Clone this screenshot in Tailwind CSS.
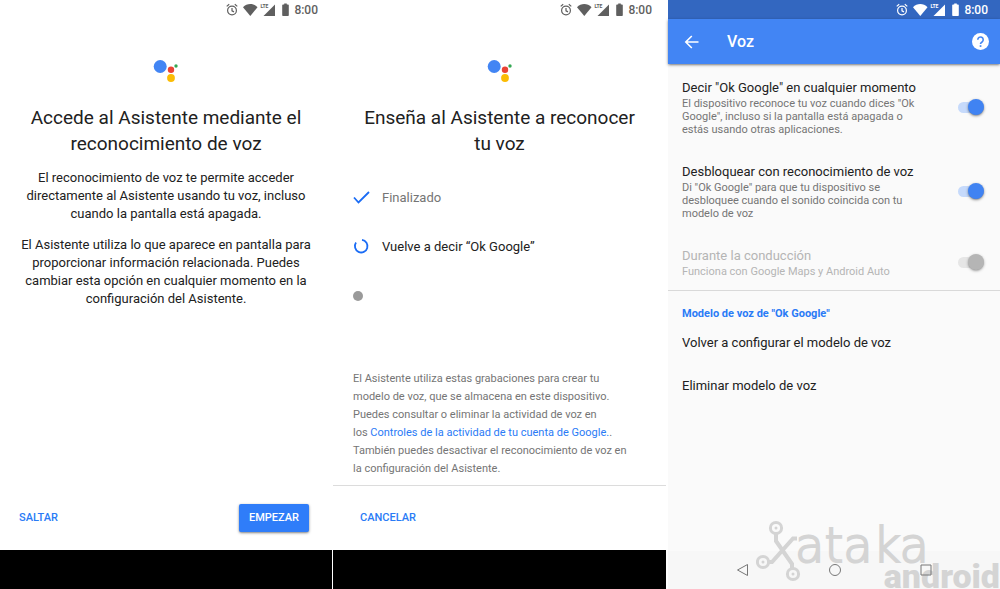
<!DOCTYPE html>
<html lang="es">
<head>
  <meta charset="UTF-8" />
  <meta name="viewport" content="width=device-width, initial-scale=1.0"/>
  <title>Asistente de Google - Voz</title>
  <script src="https://cdn.jsdelivr.net/npm/@tailwindcss/browser@4"></script>
</head>
<body class="bg-white text-[#212121] font-['Roboto',sans-serif]">

  <!-- Shared icons -->
  <svg class="hidden" aria-hidden="true">
    <symbol id="status" viewBox="0 0 64 14">
      <g fill="none" stroke="currentColor" stroke-width="1.2">
        <circle cx="6" cy="7.5" r="4.4"/>
        <path d="M6 5v2.8l2 1.1M.7 3.4 3.2 1.3M11.3 3.4 8.8 1.3"/>
      </g>
      <path fill="currentColor" d="M17 4.3C21-.1 27.500-.1 31.500 4.300L24.300 13z"/>
      <path fill="currentColor" d="M49 1.500V13H37.500z"/>
      <path fill="currentColor" d="M57 1.500h1.200V.5h2.600v1H62q.8 0 .8.8V12.200q0 .8-.8.8h-5q-.8 0-.8-.8V2.300q0-.8.8-.8z"/>
    </symbol>
    <symbol id="assistant" viewBox="0 0 26 24">
      <circle cx="7.200" cy="7.500" r="6.500" fill="#4285f4"/>
      <circle cx="18" cy="10.700" r="3.200" fill="#ea4335"/>
      <circle cx="18" cy="19" r="3.900" fill="#fbbc05"/>
      <circle cx="23" cy="7" r="1.700" fill="#34a853"/>
    </symbol>
  </svg>

  <div class="grid grid-cols-[332fr_333fr_333fr] gap-px min-h-screen">

    <!-- Screen 1: access the assistant -->
    <section class="flex flex-col">
      <div class="flex items-center justify-end gap-1 h-5 pr-3.5 text-[#5f5f5f] text-xs font-medium">
        <span class="relative flex">
          <svg class="w-16 h-3.5"><use href="#status"/></svg>
          <span class="absolute left-[34px] top-0 text-[5px] leading-[6px] font-bold">LTE</span>
        </span>
        <span>8:00</span>
      </div>
      <div class="flex-1 px-4 pt-[39px] text-center">
        <svg class="w-[26px] h-6 mx-auto"><use href="#assistant"/></svg>
        <h1 class="mt-[22px] text-[19px] leading-[26px]">Accede al Asistente mediante el<br>reconocimiento de voz</h1>
        <p class="mt-3 text-[13px] leading-[18px]">El reconocimiento de voz te permite acceder<br>directamente al Asistente usando tu voz, incluso<br>cuando la pantalla está apagada.</p>
        <p class="mt-[13px] text-[13px] leading-[18px]">El Asistente utiliza lo que aparece en pantalla para<br>proporcionar información relacionada. Puedes<br>cambiar esta opción en cualquier momento en la<br>configuración del Asistente.</p>
      </div>
      <div class="flex items-center justify-between h-16 pl-[19px] pr-[23px] text-[11px] font-medium">
        <button type="button" class="text-[#2a7bf6]">SALTAR</button>
        <button type="button" class="h-7 px-2.5 rounded-xs bg-[#2f7df9] text-white shadow-sm shadow-black/40">EMPEZAR</button>
      </div>
      <div class="h-[39px] bg-black"></div>
    </section>

    <!-- Screen 2: voice training -->
    <section class="flex flex-col">
      <div class="flex items-center justify-end gap-1 h-5 pr-3.5 text-[#5f5f5f] text-xs font-medium">
        <span class="relative flex">
          <svg class="w-16 h-3.5"><use href="#status"/></svg>
          <span class="absolute left-[34px] top-0 text-[5px] leading-[6px] font-bold">LTE</span>
        </span>
        <span>8:00</span>
      </div>
      <div class="flex-1 pt-[39px]">
        <svg class="w-[26px] h-6 mx-auto"><use href="#assistant"/></svg>
        <h1 class="mt-[22px] text-[19px] leading-[26px] text-center">Enseña al Asistente a reconocer<br>tu voz</h1>
        <ul class="mt-4 pl-5 text-[13px]">
          <li class="flex items-center gap-3 h-[49px] text-[#757575]">
            <svg class="size-[17px]" viewBox="0 0 17 17" fill="none" stroke="#1a6cf5" stroke-width="1.800"><path d="M1 8.500 5.500 13.500 16 3"/></svg>
            Finalizado
          </li>
          <li class="flex items-center gap-3 h-[49px]">
            <svg class="size-[17px]" viewBox="0 0 17 17" fill="none" stroke="#1a6cf5" stroke-width="1.800"><path d="M9 1.900A6.300 6.300 0 1 1 3 4.600"/></svg>
            Vuelve a decir “Ok Google”
          </li>
          <li class="flex items-center h-[49px]"><span class="size-2.5 rounded-full bg-[#9a9a9a]"></span></li>
        </ul>
      </div>
      <p class="px-5 pb-[7px] border-b border-[#dcdcdc] text-[11px] leading-[18px] text-[#757575]">El Asistente utiliza estas grabaciones para crear tu<br>modelo de voz, que se almacena en este dispositivo.<br>Puedes consultar o eliminar la actividad de voz en<br>los <a href="#" class="text-[#2a7bf6]">Controles de la actividad de tu cuenta de Google.</a>.<br>También puedes desactivar el reconocimiento de voz en<br>la configuración del Asistente.</p>
      <div class="flex items-center h-16 pl-[27px] text-[11px] font-medium">
        <button type="button" class="text-[#2a7bf6]">CANCELAR</button>
      </div>
      <div class="h-[39px] bg-black"></div>
    </section>

    <!-- Screen 3: voice settings -->
    <section class="flex flex-col border-l border-white bg-[#fafafa]">
      <div class="flex items-center justify-end gap-1 h-[19px] pr-3 bg-[#3367c0] text-white text-xs font-medium">
        <span class="relative flex">
          <svg class="w-16 h-3.5"><use href="#status"/></svg>
          <span class="absolute left-[34px] top-0 text-[5px] leading-[6px] font-bold">LTE</span>
        </span>
        <span>8:00</span>
      </div>
      <header class="flex items-center h-[45px] pl-4 pr-[11px] bg-[#4285f4] text-white shadow-sm shadow-black/40">
        <button type="button" aria-label="Atrás">
          <svg class="size-4" viewBox="0 0 16 16" fill="none" stroke="currentColor" stroke-width="1.600"><path d="M14.500 8H2M7.800 2 1.800 8l6 6"/></svg>
        </button>
        <h2 class="flex-1 pl-[27px] text-base font-medium">Voz</h2>
        <button type="button" aria-label="Ayuda">
          <svg class="size-[17px]" viewBox="0 0 17 17"><circle cx="8.500" cy="8.500" r="8.500" fill="#fff"/><path d="M5.800 6.700a2.700 2.700 0 1 1 4.400 2.100c-.9.700-1.700 1.100-1.700 2.200" fill="none" stroke="#4285f4" stroke-width="1.600"/><path d="M7.700 12.200h1.700v1.700H7.700z" fill="#4285f4"/></svg>
        </button>
      </header>

      <div class="flex-1">
        <div class="flex flex-col gap-[26px] pt-3.5 pb-3 pl-3.5 pr-4 border-b border-[#d9d9d9]">
          <label class="flex items-center justify-between">
            <span class="text-[11px] leading-[13px] text-[#757575]"><span class="block text-[13px] leading-[19px] text-[#212121]">Decir "Ok Google" en cualquier momento</span>El dispositivo reconoce tu voz cuando dices "Ok<br>Google", incluso si la pantalla está apagada o<br>estás usando otras aplicaciones.</span>
            <input type="checkbox" checked class="appearance-none flex items-center justify-end w-[26px] h-[11px] rounded-full bg-[#c6dafb] before:size-4 before:rounded-full before:bg-[#4083f2] before:shadow-sm before:shadow-black/40" />
          </label>
          <label class="flex items-center justify-between">
            <span class="text-[11px] leading-[13px] text-[#757575]"><span class="block text-[13px] leading-[19px] text-[#212121]">Desbloquear con reconocimiento de voz</span>Di "Ok Google" para que tu dispositivo se<br>desbloquee cuando el sonido coincida con tu<br>modelo de voz</span>
            <input type="checkbox" checked class="appearance-none flex items-center justify-end w-[26px] h-[11px] rounded-full bg-[#c6dafb] before:size-4 before:rounded-full before:bg-[#4083f2] before:shadow-sm before:shadow-black/40" />
          </label>
          <label class="flex items-center justify-between">
            <span class="text-[11px] leading-[13px] text-[#b5b5b5]"><span class="block text-[13px] leading-[19px]">Durante la conducción</span>Funciona con Google Maps y Android Auto</span>
            <input type="checkbox" disabled class="appearance-none flex items-center justify-end w-[26px] h-[11px] rounded-full bg-[#e6e6e6] before:size-4 before:rounded-full before:bg-[#b5b5b5] before:shadow-sm before:shadow-black/30" />
          </label>
        </div>
        <div class="flex flex-col items-start px-3.5 pt-4">
          <h3 class="text-[11px] leading-[14px] font-bold text-[#2a7bf6]">Modelo de voz de "Ok Google"</h3>
          <button type="button" class="h-[43px] text-[13px]">Volver a configurar el modelo de voz</button>
          <button type="button" class="h-[43px] text-[13px]">Eliminar modelo de voz</button>
        </div>
      </div>

      <nav class="relative h-[38px] bg-[#f7f7f7]">
        <!-- Watermark -->
        <svg class="absolute right-0 bottom-0 w-[244px] h-[70px] overflow-hidden" viewBox="0 0 244 70" fill="#d4d4d4" aria-hidden="true">
          <g fill="none" stroke="#d4d4d4" stroke-width="3">
            <circle cx="20" cy="9" r="5.600"/>
            <circle cx="7" cy="43" r="5.600"/>
            <circle cx="37" cy="55" r="5.600"/>
            <path stroke-width="4" d="M20 14.500V22L36 45v5M12 43h4L37 19.500h4"/>
          </g>
          <circle cx="20" cy="9" r="1.500"/>
          <circle cx="7" cy="43" r="1.500"/>
          <circle cx="37" cy="55" r="1.500"/>
          <text x="39" y="43" class="font-['DejaVu_Sans',sans-serif] font-extralight text-[48px]" stroke="#d4d4d4" stroke-width="2">ataka</text>
          <text x="244" y="69" text-anchor="end" class="font-['Roboto',sans-serif] font-black text-[34px]">android</text>
        </svg>
        <div class="relative flex items-center justify-between h-full pl-[68px] pr-[67px] text-[#777777]">
          <button type="button" aria-label="Atrás"><svg class="size-3.5" viewBox="0 0 14 14" fill="none" stroke="currentColor"><path d="M11.500 1.500v11L1.500 7z"/></svg></button>
          <button type="button" aria-label="Inicio"><svg class="size-3.5" viewBox="0 0 14 14" fill="none" stroke="currentColor"><circle cx="7" cy="7" r="5.500"/></svg></button>
          <button type="button" aria-label="Recientes"><svg class="size-3.5" viewBox="0 0 14 14" fill="none" stroke="currentColor"><path d="M2 2h10v10H2z"/></svg></button>
        </div>
      </nav>
    </section>
  </div>
</body>
</html>
